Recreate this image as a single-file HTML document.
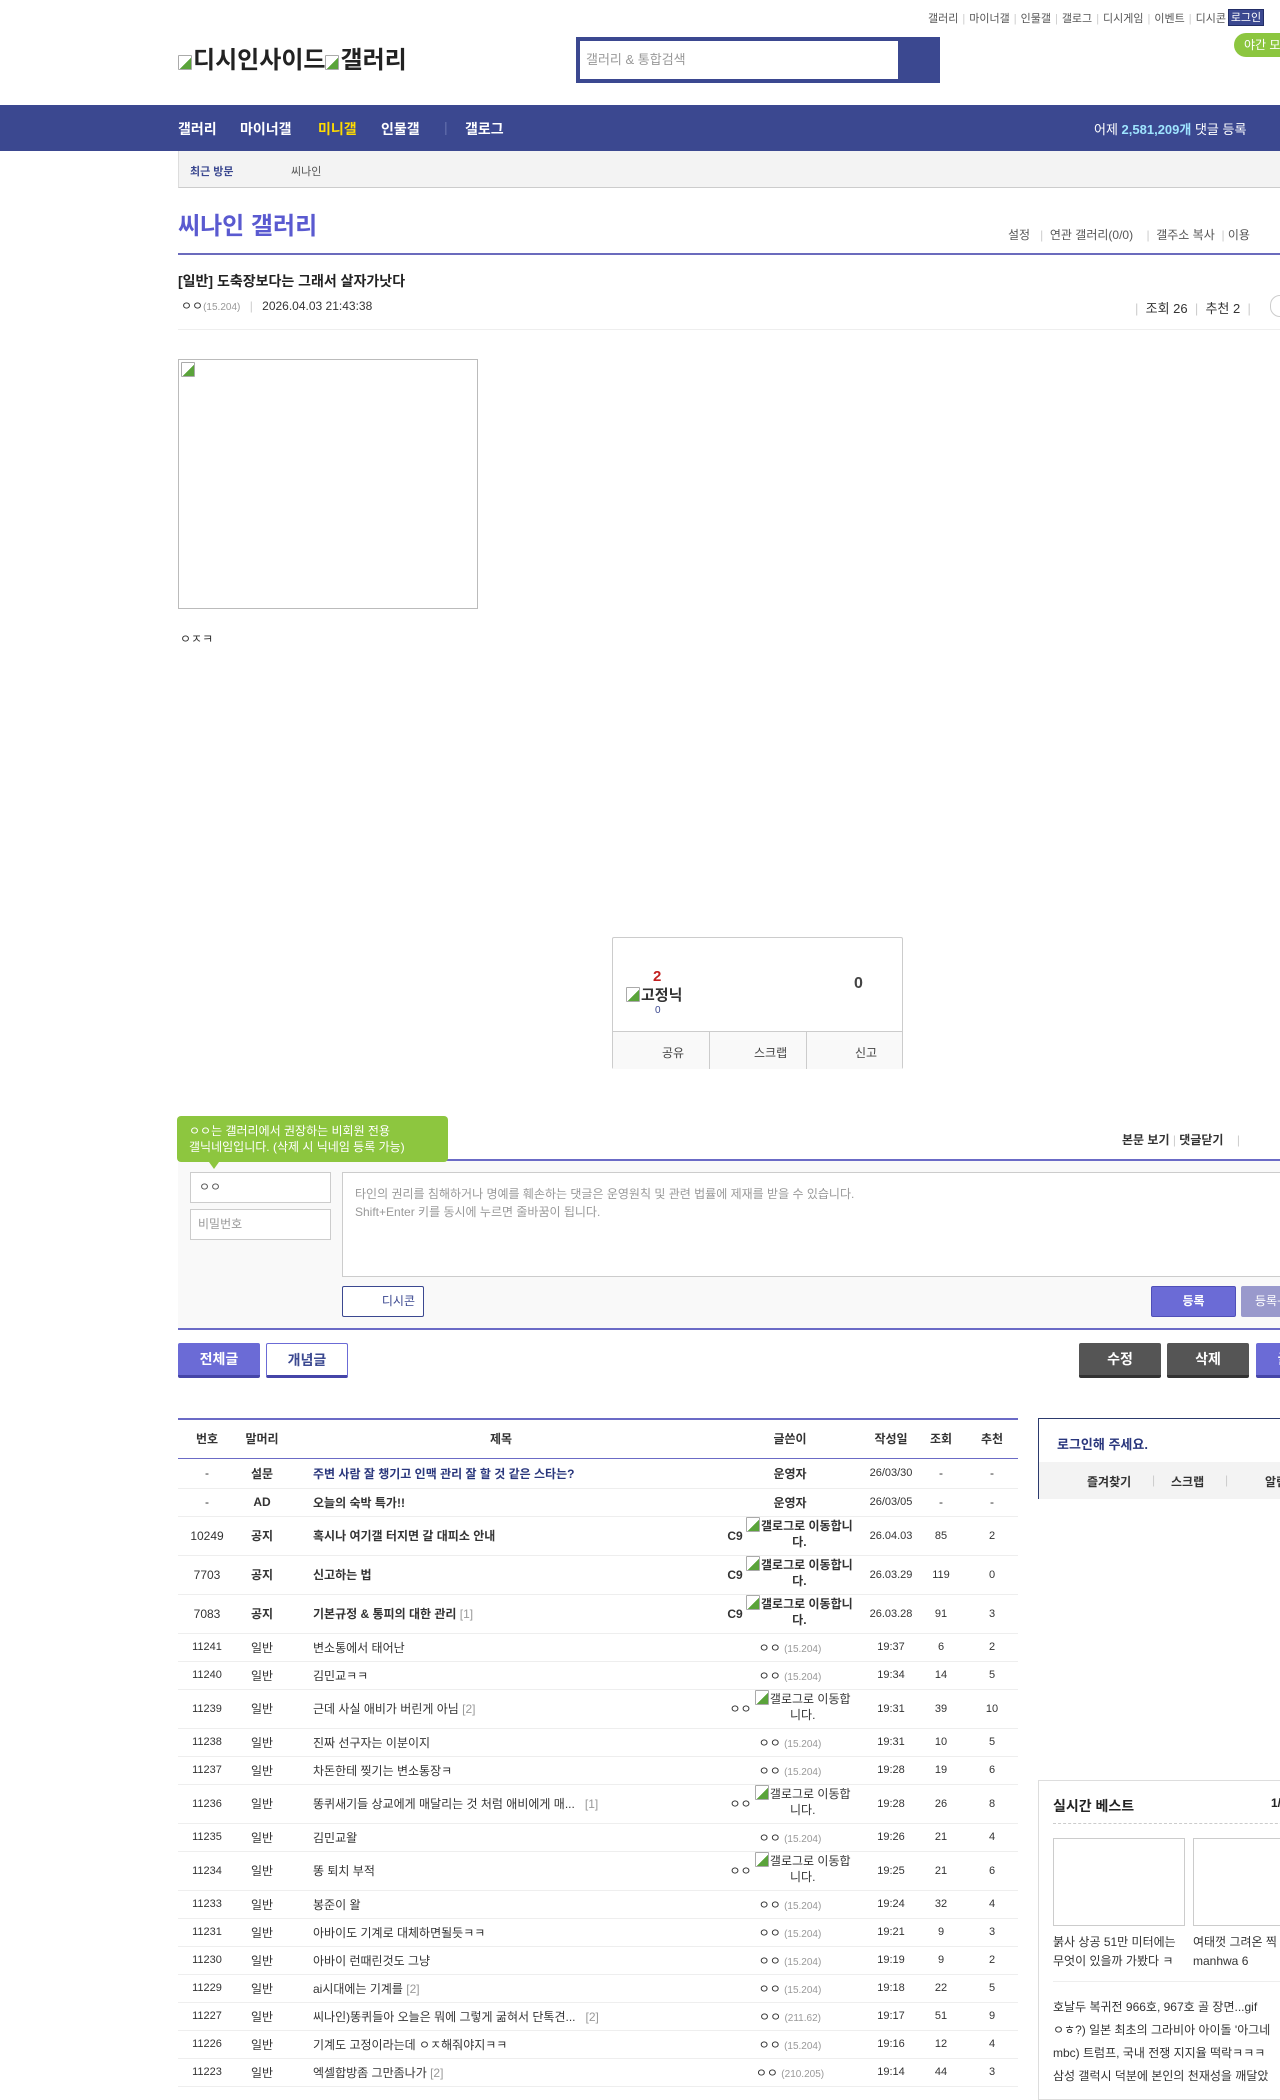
<!DOCTYPE html>
<html><head><meta charset="utf-8">
<style>
*{margin:0;padding:0;box-sizing:border-box}
body{width:1280px;height:2081px;overflow:hidden;position:relative;background:#fff;font-family:"Liberation Sans","Noto Sans CJK KR",sans-serif;color:#333;font-size:12px}
.a{position:absolute;white-space:nowrap}
.toplinks{top:10px;right:54px;font-size:11px;color:#555}
.toplinks span{margin:0 4px}
.toplinks i{color:#ccc;font-style:normal}
.bi{display:inline-block;width:14px;height:15px;border:1px solid #aaa;border-radius:1px;background:linear-gradient(135deg,#fff 55%,#5aa33a 55%);vertical-align:-2px;margin-right:1px}
.nav{top:105px;left:0;width:1280px;height:46px;background:#3b4890}
.nav .it{position:absolute;top:14px;color:#fff;font-weight:bold;font-size:14px}
.recent{top:151px;left:178px;width:1102px;height:37px;background:#f3f3f3;border-bottom:1px solid #ccc;border-left:1px solid #ddd}
table{border-collapse:collapse;position:absolute;left:178px;top:1418px;width:840px;font-size:12px;table-layout:fixed}
td,th{border-bottom:1px solid #eee;text-align:center;padding:0;white-space:nowrap;overflow:hidden}
th{height:39px;font-weight:bold;color:#333;border-top:2px solid #6b6bc6;border-bottom:1px solid #6b6bc6;font-size:12px}
tr.n td{height:28px}
tr.t td{height:39px}
td.s{text-align:left;padding-left:25px}
.ip{color:#999;font-size:10px}
.w2{display:inline-block;line-height:16px;text-align:center;font-size:12px}
.btn{position:absolute;height:35px;font-size:14px;font-weight:bold;text-align:center;line-height:33px;border-radius:2px}
</style></head><body>

<div class="a toplinks">갤러리<span><i>|</i></span>마이너갤<span><i>|</i></span>인물갤<span><i>|</i></span>갤로그<span><i>|</i></span>디시게임<span><i>|</i></span>이벤트<span><i>|</i></span>디시콘</div>
<div class="a" style="left:1228px;top:9px;width:36px;height:17px;background:#3b4890;color:#fff;font-size:11px;text-align:center;line-height:17px;border:1px solid #222d66">로그인</div>
<div class="a" style="left:1234px;top:33px;width:60px;height:24px;background:#8cc63f;border-radius:12px;color:#fff;font-size:12px;line-height:24px;padding-left:10px">야간 모드</div>

<div class="a" style="left:178px;top:40px;font-size:24px;font-weight:bold;color:#222"><span class="bi"></span>디시인사이드<span class="bi"></span>갤러리</div>
<div class="a" style="left:576px;top:37px;width:364px;height:46px;background:#3b4890;padding:4px"><div style="width:318px;height:38px;background:#fff;color:#999;font-size:13px;line-height:38px;padding-left:6px">갤러리 &amp; 통합검색</div></div>

<div class="a nav">
<span class="it" style="left:178px">갤러리</span>
<span class="it" style="left:240px">마이너갤</span>
<span class="it" style="left:318px;color:#ffdb00">미니갤</span>
<span class="it" style="left:381px">인물갤</span>
<span class="it" style="left:444px;color:#6470ad;font-weight:normal">|</span>
<span class="it" style="left:465px">갤로그</span>
<span class="it" style="left:1094px;font-weight:normal;font-size:13px">어제 <b style="color:#9ee4ff">2,581,209개</b> 댓글 등록</span>
</div>
<div class="a recent"><span class="a" style="left:11px;top:12px;font-size:11px;color:#3b4890;font-weight:bold">최근 방문</span><span class="a" style="left:112px;top:12px;font-size:11px;color:#555">씨나인</span></div>

<div class="a" style="left:178px;top:206px;font-size:24px;font-weight:bold;color:#5a5ad0">씨나인 갤러리</div>
<div class="a" style="left:1008px;top:226px;font-size:12px;color:#555">설정 &nbsp;&nbsp;<span style="color:#ccc">|</span>&nbsp; 연관 갤러리(0/0) &nbsp;&nbsp;&nbsp;<span style="color:#ccc">|</span>&nbsp; 갤주소 복사 &nbsp;<span style="color:#ccc">|</span> 이용</div>
<div class="a" style="left:178px;top:253px;width:1102px;height:2px;background:#6b6bbd"></div>

<div class="a" style="left:178px;top:271px;font-size:14px;font-weight:bold;color:#222">[일반] 도축장보다는 그래서 살자가낫다</div>
<div class="a" style="left:181px;top:297px;font-size:12px;color:#333">ㅇㅇ<span style="color:#999;font-size:10px">(15.204)</span> <span style="color:#ccc;margin:0 6px">|</span> 2026.04.03 21:43:38</div>
<div class="a" style="left:1135px;top:298px;font-size:13px;color:#333"><span style="color:#ccc">|</span>&nbsp; 조회 26 <span style="color:#ccc">&nbsp;|&nbsp;</span> 추천 2 <span style="color:#ccc">&nbsp;|</span></div>
<div class="a" style="left:1270px;top:295px;width:20px;height:22px;border:1px solid #ccc;border-radius:11px"></div>
<div class="a" style="left:178px;top:329px;width:1102px;height:1px;background:#eee"></div>

<div class="a" style="left:178px;top:359px;width:300px;height:250px;border:1px solid #bbb;padding:2px"><span class="bi"></span></div>
<div class="a" style="left:180px;top:630px;font-size:12px;color:#333">ㅇㅈㅋ</div>

<div class="a" style="left:612px;top:937px;width:291px;height:132px;border:1px solid #ccc;border-radius:2px">
<div class="a" style="left:40px;top:30px;font-size:15px;font-weight:bold;color:#c32020">2</div>
<div class="a" style="left:13px;top:46px;font-size:15px;font-weight:bold;color:#333"><span class="bi"></span>고정닉</div>
<div class="a" style="left:42px;top:67px;font-size:10px;color:#3b4890">0</div>
<div class="a" style="left:241px;top:37px;font-size:16px;font-weight:bold;color:#444">0</div>
<div class="a" style="left:0;top:93px;width:289px;height:38px;background:#f9f9f9;border-top:1px solid #ccc;font-size:12px;color:#444">
<span class="a" style="left:49px;top:12px">공유</span>
<span class="a" style="left:96px;top:0;width:1px;height:37px;background:#ccc"></span>
<span class="a" style="left:141px;top:12px">스크랩</span>
<span class="a" style="left:193px;top:0;width:1px;height:37px;background:#ccc"></span>
<span class="a" style="left:242px;top:12px">신고</span>
</div></div>

<div class="a" style="left:178px;top:1128px;font-size:14px;font-weight:bold">전체 댓글 0개 &nbsp; 등록순</div>
<div class="a" style="left:1122px;top:1131px;font-size:12px;font-weight:bold;color:#333">본문 보기 <span style="color:#ccc;font-weight:normal">|</span> 댓글닫기 <span style="color:#ccc;font-weight:normal">&nbsp;&nbsp; |</span></div>
<div class="a" style="left:178px;top:1159px;width:1102px;height:2px;background:#6b6bc6"></div>
<div class="a" style="left:178px;top:1161px;width:1102px;height:168px;background:#f9f9f9"></div>
<div class="a" style="left:177px;top:1116px;width:271px;height:46px;background:#8dc63f;border-radius:4px;color:#fff;font-size:12px;line-height:16px;padding:7px 12px">ㅇㅇ는 갤러리에서 권장하는 비회원 전용<br>갤닉네임입니다. (삭제 시 닉네임 등록 가능)</div>
<div class="a" style="left:209px;top:1162px;width:0;height:0;border-left:5px solid transparent;border-right:5px solid transparent;border-top:7px solid #8dc63f"></div>
<div class="a" style="left:190px;top:1172px;width:141px;height:31px;border:1px solid #ccc;background:#fff;font-size:12px;color:#555;line-height:29px;padding-left:8px">ㅇㅇ</div>
<div class="a" style="left:190px;top:1209px;width:141px;height:31px;border:1px solid #ccc;background:#fff;font-size:12px;color:#999;line-height:29px;padding-left:7px">비밀번호</div>
<div class="a" style="left:342px;top:1172px;width:950px;height:105px;border:1px solid #ccc;background:#fff;font-size:12px;color:#999;line-height:18px;padding:12px 12px">타인의 권리를 침해하거나 명예를 훼손하는 댓글은 운영원칙 및 관련 법률에 제재를 받을 수 있습니다.<br>Shift+Enter 키를 동시에 누르면 줄바꿈이 됩니다.</div>
<div class="a" style="left:342px;top:1286px;width:82px;height:31px;border:1px solid #3b4890;border-radius:2px;background:#fff;font-size:12px;color:#3b4890;line-height:29px;text-align:right;padding-right:8px">디시콘</div>
<div class="a" style="left:1151px;top:1286px;width:85px;height:31px;background:#6b6bd6;border:1px solid #4f4fb8;border-radius:2px;color:#fff;font-size:12px;font-weight:bold;text-align:center;line-height:29px">등록</div>
<div class="a" style="left:1241px;top:1286px;width:60px;height:31px;background:#9999cc;border-radius:2px;color:#fff;font-size:12px;line-height:31px;padding-left:14px">등록+추천</div>
<div class="a" style="left:178px;top:1328px;width:1102px;height:2px;background:#6b6bc6"></div>

<div class="btn" style="left:178px;top:1343px;width:82px;background:#6b6bd6;color:#fff;border-bottom:3px solid #4545a8">전체글</div>
<div class="btn" style="left:266px;top:1343px;width:82px;background:#fff;color:#3b4890;border:1px solid #6b6bd6;border-bottom:3px solid #4545a8">개념글</div>
<div class="btn" style="left:1079px;top:1343px;width:82px;background:#555;color:#fff;border-bottom:3px solid #333">수정</div>
<div class="btn" style="left:1167px;top:1343px;width:82px;background:#555;color:#fff;border-bottom:3px solid #333">삭제</div>
<div class="btn" style="left:1256px;top:1343px;width:82px;background:#6b6bd6;color:#fff;border-bottom:3px solid #4545a8">글쓰기</div>

<table>
<colgroup><col style="width:58px"><col style="width:52px"><col style="width:426px"><col style="width:152px"><col style="width:50px"><col style="width:50px"><col style="width:52px"></colgroup>
<tr><th>번호</th><th>말머리</th><th>제목</th><th>글쓴이</th><th>작성일</th><th>조회</th><th>추천</th></tr>
<tr class="n"><td style="height:30px">-</td><td><b>설문</b></td><td class="s"><b style="color:#29367c">주변 사람 잘 챙기고 인맥 관리 잘 할 것 같은 스타는?</b></td><td><b>운영자</b></td><td style="font-size:11px">26/03/30</td><td>-</td><td>-</td></tr>
<tr class="n"><td>-</td><td><b>AD</b></td><td class="s"><b>오늘의 숙박 특가!!</b></td><td><b>운영자</b></td><td style="font-size:11px">26/03/05</td><td>-</td><td>-</td></tr>
<tr class="t"><td>10249</td><td><b>공지</b></td><td class="s"><b>혹시나 여기갤 터지면 갈 대피소 안내</b></td><td><b style="vertical-align:top;line-height:38px">C9</b> <span class="w2"><b><span class="bi"></span>갤로그로 이동합니</b><br><b>다.</b></span></td><td style="font-size:11px">26.04.03</td><td style="font-size:11px">85</td><td style="font-size:11px">2</td></tr>
<tr class="t"><td>7703</td><td><b>공지</b></td><td class="s"><b>신고하는 법</b></td><td><b style="vertical-align:top;line-height:38px">C9</b> <span class="w2"><b><span class="bi"></span>갤로그로 이동합니</b><br><b>다.</b></span></td><td style="font-size:11px">26.03.29</td><td style="font-size:11px">119</td><td style="font-size:11px">0</td></tr>
<tr class="t"><td>7083</td><td><b>공지</b></td><td class="s"><b>기본규정 &amp; 통피의 대한 관리</b> <span style="color:#999">[1]</span></td><td><b style="vertical-align:top;line-height:38px">C9</b> <span class="w2"><b><span class="bi"></span>갤로그로 이동합니</b><br><b>다.</b></span></td><td style="font-size:11px">26.03.28</td><td style="font-size:11px">91</td><td style="font-size:11px">3</td></tr>
<tr class="n"><td style="font-size:11px">11241</td><td>일반</td><td class="s">변소통에서 태어난</td><td>ㅇㅇ <span class="ip">(15.204)</span></td><td style="font-size:11px">19:37</td><td style="font-size:11px">6</td><td style="font-size:11px">2</td></tr>
<tr class="n"><td style="font-size:11px">11240</td><td>일반</td><td class="s">김민교ㅋㅋ</td><td>ㅇㅇ <span class="ip">(15.204)</span></td><td style="font-size:11px">19:34</td><td style="font-size:11px">14</td><td style="font-size:11px">5</td></tr>
<tr class="t"><td style="font-size:11px">11239</td><td>일반</td><td class="s">근데 사실 애비가 버린게 아님 <span style="color:#999">[2]</span></td><td><span style="vertical-align:top;line-height:38px">ㅇㅇ</span> <span class="w2"><span class="bi"></span>갤로그로 이동합<br>니다.</span></td><td style="font-size:11px">19:31</td><td style="font-size:11px">39</td><td style="font-size:11px">10</td></tr>
<tr class="n"><td style="font-size:11px">11238</td><td>일반</td><td class="s">진짜 선구자는 이분이지</td><td>ㅇㅇ <span class="ip">(15.204)</span></td><td style="font-size:11px">19:31</td><td style="font-size:11px">10</td><td style="font-size:11px">5</td></tr>
<tr class="n"><td style="font-size:11px">11237</td><td>일반</td><td class="s">차돈한테 찢기는 변소통장ㅋ</td><td>ㅇㅇ <span class="ip">(15.204)</span></td><td style="font-size:11px">19:28</td><td style="font-size:11px">19</td><td style="font-size:11px">6</td></tr>
<tr class="t"><td style="font-size:11px">11236</td><td>일반</td><td class="s">똥퀴새기들 상교에게 매달리는 것 처럼 애비에게 매... &nbsp;&nbsp;<span style="color:#999">[1]</span></td><td><span style="vertical-align:top;line-height:38px">ㅇㅇ</span> <span class="w2"><span class="bi"></span>갤로그로 이동합<br>니다.</span></td><td style="font-size:11px">19:28</td><td style="font-size:11px">26</td><td style="font-size:11px">8</td></tr>
<tr class="n"><td style="font-size:11px">11235</td><td>일반</td><td class="s">김민교왈</td><td>ㅇㅇ <span class="ip">(15.204)</span></td><td style="font-size:11px">19:26</td><td style="font-size:11px">21</td><td style="font-size:11px">4</td></tr>
<tr class="t"><td style="font-size:11px">11234</td><td>일반</td><td class="s">똥 퇴치 부적</td><td><span style="vertical-align:top;line-height:38px">ㅇㅇ</span> <span class="w2"><span class="bi"></span>갤로그로 이동합<br>니다.</span></td><td style="font-size:11px">19:25</td><td style="font-size:11px">21</td><td style="font-size:11px">6</td></tr>
<tr class="n"><td style="font-size:11px">11233</td><td>일반</td><td class="s">봉준이 왈</td><td>ㅇㅇ <span class="ip">(15.204)</span></td><td style="font-size:11px">19:24</td><td style="font-size:11px">32</td><td style="font-size:11px">4</td></tr>
<tr class="n"><td style="font-size:11px">11231</td><td>일반</td><td class="s">아바이도 기계로 대체하면될듯ㅋㅋ</td><td>ㅇㅇ <span class="ip">(15.204)</span></td><td style="font-size:11px">19:21</td><td style="font-size:11px">9</td><td style="font-size:11px">3</td></tr>
<tr class="n"><td style="font-size:11px">11230</td><td>일반</td><td class="s">아바이 런때린것도 그냥</td><td>ㅇㅇ <span class="ip">(15.204)</span></td><td style="font-size:11px">19:19</td><td style="font-size:11px">9</td><td style="font-size:11px">2</td></tr>
<tr class="n"><td style="font-size:11px">11229</td><td>일반</td><td class="s">ai시대에는 기계를 <span style="color:#999">[2]</span></td><td>ㅇㅇ <span class="ip">(15.204)</span></td><td style="font-size:11px">19:18</td><td style="font-size:11px">22</td><td style="font-size:11px">5</td></tr>
<tr class="n"><td style="font-size:11px">11227</td><td>일반</td><td class="s">씨나인)똥퀴들아 오늘은 뭐에 그렇게 굶혀서 단톡견... &nbsp;&nbsp;<span style="color:#999">[2]</span></td><td>ㅇㅇ <span class="ip">(211.62)</span></td><td style="font-size:11px">19:17</td><td style="font-size:11px">51</td><td style="font-size:11px">9</td></tr>
<tr class="n"><td style="font-size:11px">11226</td><td>일반</td><td class="s">기계도 고정이라는데 ㅇㅈ해줘야지ㅋㅋ</td><td>ㅇㅇ <span class="ip">(15.204)</span></td><td style="font-size:11px">19:16</td><td style="font-size:11px">12</td><td style="font-size:11px">4</td></tr>
<tr class="n"><td style="font-size:11px">11223</td><td>일반</td><td class="s">엑셀합방좀 그만좀나가 <span style="color:#999">[2]</span></td><td>ㅇㅇ <span class="ip">(210.205)</span></td><td style="font-size:11px">19:14</td><td style="font-size:11px">44</td><td style="font-size:11px">3</td></tr>
</table>

<div class="a" style="left:1038px;top:1418px;width:260px;height:81px;border:1px solid #2c3a6d">
<div class="a" style="left:18px;top:15px;font-size:13px;font-weight:bold;color:#29367c">로그인해 주세요.</div>
<div class="a" style="left:0;top:43px;width:260px;height:37px;background:#f3f3f3;font-size:12px;font-weight:bold;color:#333">
<span class="a" style="left:48px;top:11px">즐겨찾기</span><span class="a" style="left:113px;top:11px;color:#ccc;font-weight:normal">|</span>
<span class="a" style="left:132px;top:11px">스크랩</span><span class="a" style="left:186px;top:11px;color:#ccc;font-weight:normal">|</span>
<span class="a" style="left:226px;top:11px">알림</span></div></div>

<div class="a" style="left:1038px;top:1780px;width:260px;height:320px;border:1px solid #ddd">
<div class="a" style="left:14px;top:15px;font-size:14px;font-weight:bold;color:#222">실시간 베스트</div>
<div class="a" style="left:232px;top:15px;font-size:12px;font-weight:bold;color:#222">1/5</div>
<div class="a" style="left:14px;top:42px;width:240px;border-top:1px dashed #ccc"></div>
<div class="a" style="left:14px;top:57px;width:132px;height:88px;border:1px solid #ccc"></div>
<div class="a" style="left:154px;top:57px;width:132px;height:88px;border:1px solid #ccc"></div>
<div class="a" style="left:14px;top:152px;font-size:12px;color:#333;line-height:19px">붉사 상공 51만 미터에는<br>무엇이 있을까 가봤다 ㅋ</div>
<div class="a" style="left:154px;top:152px;font-size:12px;color:#333;line-height:19px">여태껏 그려온 찍<br>manhwa 6</div>
<div class="a" style="left:14px;top:200px;width:240px;height:1px;background:#eee"></div>
<div class="a" style="left:14px;top:215px;font-size:12px;color:#333;line-height:23px">호날두 복귀전 966호, 967호 골 장면...gif<br>ㅇㅎ?) 일본 최초의 그라비아 아이돌 '아그네<br>mbc) 트럼프, 국내 전쟁 지지율 떡락ㅋㅋㅋ<br>삼성 갤럭시 덕분에 본인의 천재성을 깨달았</div>
</div>

</body></html>
